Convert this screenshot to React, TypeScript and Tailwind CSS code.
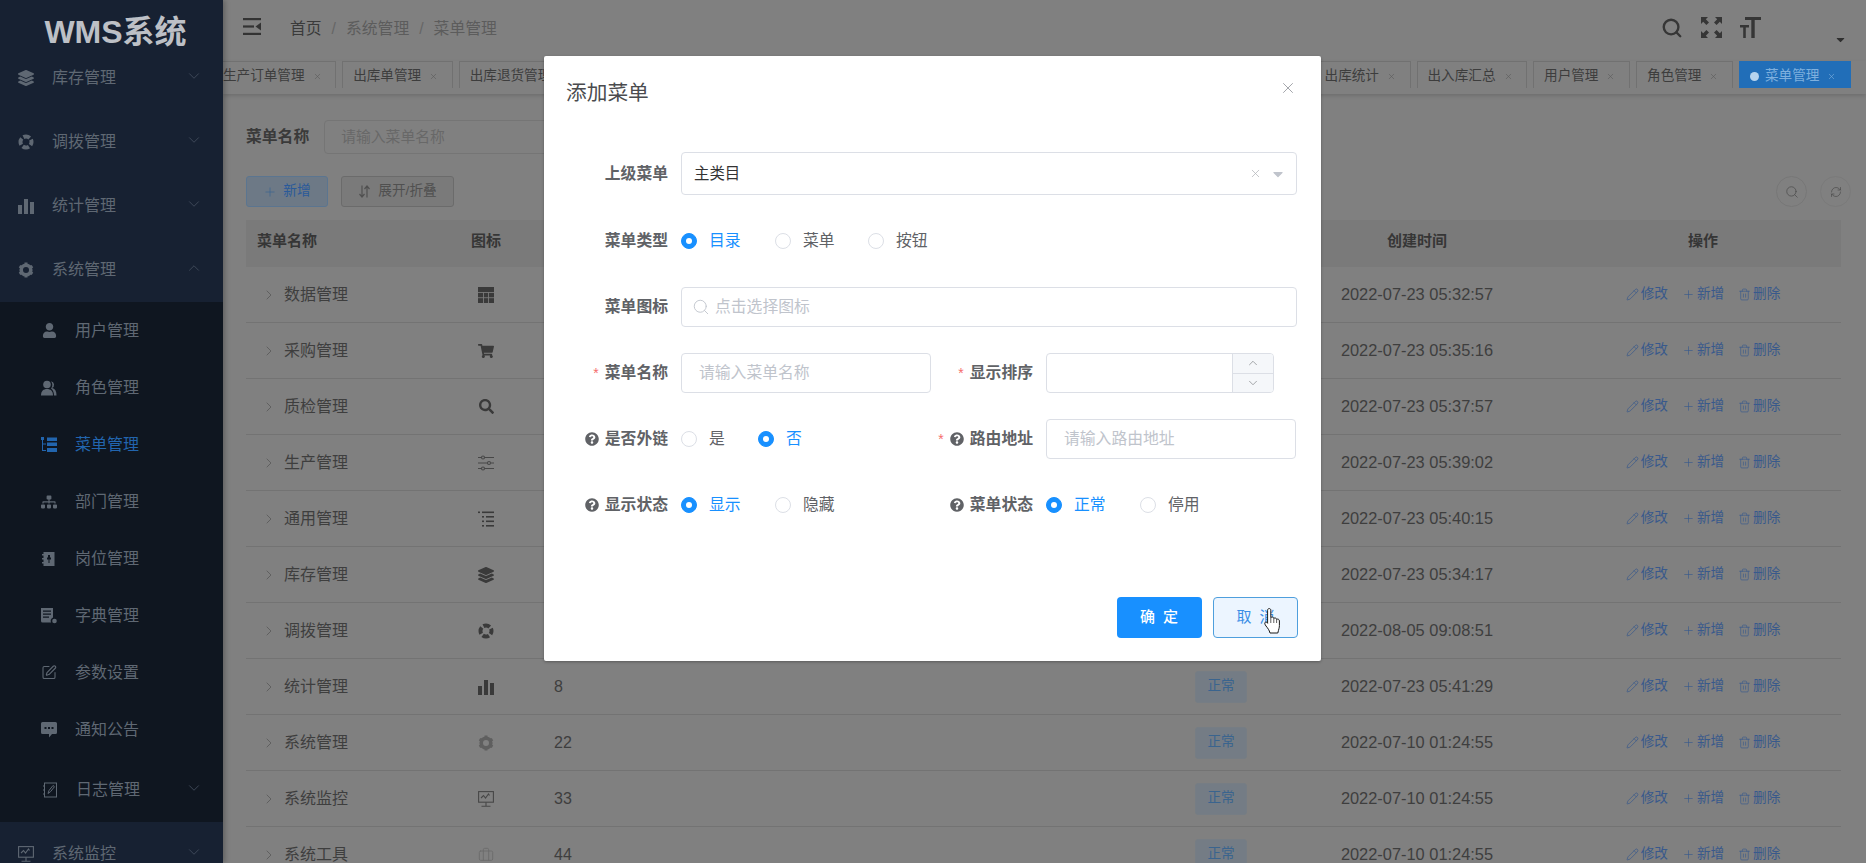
import type { ReactNode } from 'react';
import { FaLayerGroup, FaSearch, FaShoppingCart, FaSitemap, FaUser, FaQuestionCircle, FaCaretDown } from 'react-icons/fa';
import { Briefcase, ChevronDown, ChevronRight, ChevronUp, Pencil, Plus, RefreshCw, Search, SquarePen, Trash2, X } from 'lucide-react';

const FONT = "font-['Liberation_Sans','Noto_Sans_CJK_SC',sans-serif]";

function BarsIcon({ size = 16 }: { size?: number }) {
  return (
    <svg width={size} height={size} viewBox="0 0 16 16" fill="currentColor">
      <rect x="0" y="7" width="4" height="9" />
      <rect x="6" y="1" width="4" height="15" />
      <rect x="12" y="4" width="4" height="12" />
    </svg>
  );
}

function RingIcon() {
  return (
    <svg width="16" height="16" viewBox="0 0 16 16" fill="none" stroke="currentColor">
      <circle cx="8" cy="8" r="5.500" strokeWidth="4" strokeDasharray="6.640 2" strokeDashoffset="3.320" />
    </svg>
  );
}

function GearIcon() {
  return (
    <svg width="16" height="16" viewBox="0 0 16 16" fill="none" stroke="currentColor">
      <circle cx="8" cy="8" r="4.800" strokeWidth="3.600" />
      <path d="M8 0.500v2.500M8 13v2.500M1.500 4.250l2.200 1.250M12.300 10.500l2.200 1.250M1.500 11.750l2.200-1.250M12.300 5.500l2.200-1.250" strokeWidth="3" />
    </svg>
  );
}

function RoleIcon() {
  return (
    <svg width="16" height="16" viewBox="0 0 16 16" fill="currentColor">
      <circle cx="6" cy="4.500" r="3.800" />
      <path d="M0 15.500c0-4.500 2.500-6.500 6-6.500s6 2 6 6.500z" />
      <path d="M10 1.200a3.600 3.600 0 0 1 1 6.800c3 .5 4.500 3 4.500 7.500H13c0-3-1-5.500-3-7 .8-1 1.500-2.300 1.300-4-.1-1.500-.6-2.500-1.300-3.300z" />
    </svg>
  );
}

function TreeTableIcon() {
  return (
    <svg width="16" height="16" viewBox="0 0 16 16" fill="currentColor">
      <rect x="0" y="0" width="3" height="3" />
      <rect x="1" y="3" width="1" height="11" />
      <rect x="1" y="6.500" width="4" height="1" />
      <rect x="1" y="13" width="4" height="1" />
      <rect x="6" y="0.500" width="10" height="3.500" />
      <rect x="6" y="5.500" width="10" height="3.500" />
      <rect x="6" y="11" width="10" height="4" />
    </svg>
  );
}

function PostIcon() {
  return (
    <svg width="16" height="16" viewBox="0 0 16 16" fill="currentColor">
      <path fillRule="evenodd" d="M2.500 1h11v14h-11zM7 4v2.500h-1v2h1.500V12h1V8.500H10v-2H9V4z" />
      <rect x="1" y="3" width="2" height="1.500" />
      <rect x="1" y="7" width="2" height="1.500" />
      <rect x="1" y="11" width="2" height="1.500" />
    </svg>
  );
}

function DictIcon() {
  return (
    <svg width="16" height="16" viewBox="0 0 16 16" fill="currentColor">
      <path fillRule="evenodd" d="M0 0h12v9.500a4 4 0 0 0-2 5H1.500A1.500 1.500 0 0 1 0 13zM2 2.500v1.300h8V2.500zM2 5.500v1.300h8V5.500zM2 8.500v1.300h6V8.500z" />
      <circle cx="13.500" cy="13" r="2.300" />
    </svg>
  );
}

function NoticeIcon() {
  return (
    <svg width="16" height="16" viewBox="0 0 16 16" fill="currentColor">
      <path fillRule="evenodd" d="M1.500 0h13A1.500 1.500 0 0 1 16 1.500v9a1.500 1.500 0 0 1-1.500 1.500H11l-3 3.500V12H1.500A1.500 1.500 0 0 1 0 10.500v-9A1.500 1.500 0 0 1 1.500 0zM3.500 5v2h2V5zM7 5v2h2V5zM10.500 5v2h2V5z" />
    </svg>
  );
}

function LogIcon() {
  return (
    <svg width="15" height="16" viewBox="0 0 15 16" fill="none" stroke="currentColor" strokeWidth="1">
      <rect x="1.500" y="1" width="12" height="14" />
      <path d="M5 11.500l1-3 4-5 1.500 1.200-4 5z" />
      <path d="M0 4h2M0 8h2M0 12h2" />
    </svg>
  );
}

function ListIndentIcon() {
  return (
    <svg width="16" height="16" viewBox="0 0 16 16" fill="currentColor">
      <rect x="0" y="0.500" width="2" height="1.600" />
      <rect x="4" y="0.500" width="12" height="1.600" />
      <rect x="4" y="5" width="2" height="1.600" />
      <rect x="8" y="5" width="8" height="1.600" />
      <rect x="4" y="9.500" width="2" height="1.600" />
      <rect x="8" y="9.500" width="8" height="1.600" />
      <rect x="4" y="14" width="2" height="1.600" />
      <rect x="8" y="14" width="8" height="1.600" />
    </svg>
  );
}

function TableIcon() {
  return (
    <svg width="16" height="16" viewBox="0 0 16 16">
      <rect width="16" height="16" fill="currentColor" />
      <path d="M5.500 5.500V16M10.500 5.500V16M0 5.500h16M0 10.700h16" stroke="#808080" strokeWidth="0.800" />
    </svg>
  );
}

function SlidersIcon() {
  return (
    <svg width="16" height="16" viewBox="0 0 16 16" fill="none" stroke="currentColor" strokeWidth="1.100">
      <path d="M0 2.500h3.500M6.500 2.500H16M0 8h9.500M12.500 8H16M0 13.500h3.500M6.500 13.500H16" />
      <circle cx="5" cy="2.500" r="1.500" />
      <circle cx="11" cy="8" r="1.500" />
      <circle cx="5" cy="13.500" r="1.500" />
    </svg>
  );
}

function MonitorIcon() {
  return (
    <svg width="16" height="16" viewBox="0 0 16 16" fill="none" stroke="currentColor" strokeWidth="1.100">
      <rect x="0.600" y="0.600" width="14.800" height="10.600" />
      <path d="M3 7l2.500-2.500 2 2.500 3-4 1 1.500" />
      <path d="M8 11.200V15M3.500 15.300h9" />
    </svg>
  );
}

function ExpandIcon() {
  return (
    <svg width="13" height="13" viewBox="0 0 13 13" fill="none" stroke="currentColor" strokeWidth="1.200">
      <path d="M4 0.500v11M1.500 9l2.500 3 2.500-3" />
      <path d="M9 12.500v-11M6.500 4L9 1l2.500 3" />
    </svg>
  );
}

function HamburgerIcon() {
  return (
    <svg width="18" height="17" viewBox="0 0 18 17" fill="currentColor">
      <rect x="0" y="0" width="18" height="2.200" />
      <rect x="0" y="7.400" width="11" height="2.200" />
      <rect x="0" y="14.800" width="18" height="2.200" />
      <path d="M18 4.500v8l-5.500-4z" />
    </svg>
  );
}

function FullscreenIcon() {
  return (
    <svg width="21" height="21" viewBox="0 0 21 21" fill="currentColor">
      <path d="M0 0h7L4.800 2.200 8 5.400 5.400 8 2.200 4.800 0 7z" />
      <path d="M21 0v7l-2.200-2.200L15.600 8 13 5.400l3.200-3.200L14 0z" />
      <path d="M0 21v-7l2.200 2.200L5.400 13 8 15.600l-3.200 3.200L7 21z" />
      <path d="M21 21h-7l2.200-2.200L13 15.600 15.600 13l3.200 3.200L21 14z" />
    </svg>
  );
}

function FontSizeIcon() {
  return (
    <svg width="21" height="21" viewBox="0 0 21 21" fill="currentColor">
      <path d="M5 0h16v3h-6.300v18h-3.400V3H5z" />
      <path d="M0 8h9v2.400H5.800V21H3.200V10.400H0z" />
    </svg>
  );
}

function HandCursor() {
  return (
    <svg width="20" height="27" viewBox="0 0 20 27">
      <path
        d="M3.600 3.200c0-2.200 3.200-2.200 3.200 0v7.300c1.200-.8 2.800-.4 3 .8 1-.7 2.600-.3 2.800 1 1.100-.6 2.800 0 2.800 1.600v4.600c0 2.300-.7 3.800-1.600 7.500H6c-.8-3-2-4.500-4-7C.8 17.500.4 16 1.200 15.300c.8-.7 1.700 0 2.400 1z"
        fill="#ffffff"
        stroke="#1a1a1a"
        strokeWidth="1"
        strokeLinejoin="round"
      />
      <path d="M6.800 10.500V16M9.800 11.300V16M12.600 12.300V16" stroke="#1a1a1a" strokeWidth="0.700" />
    </svg>
  );
}

interface MenuItem {
  label: string;
  icon: ReactNode;
  arrow?: 'up' | 'down';
  active?: boolean;
}

const topMenus: MenuItem[] = [
  { label: '库存管理', icon: <FaLayerGroup size={16} />, arrow: 'down' },
  { label: '调拨管理', icon: <RingIcon />, arrow: 'down' },
  { label: '统计管理', icon: <BarsIcon />, arrow: 'down' },
  { label: '系统管理', icon: <GearIcon />, arrow: 'up' },
];

const subMenus: MenuItem[] = [
  { label: '用户管理', icon: <FaUser size={15} /> },
  { label: '角色管理', icon: <RoleIcon /> },
  { label: '菜单管理', icon: <TreeTableIcon />, active: true },
  { label: '部门管理', icon: <FaSitemap size={16} /> },
  { label: '岗位管理', icon: <PostIcon /> },
  { label: '字典管理', icon: <DictIcon /> },
  { label: '参数设置', icon: <SquarePen size={17} strokeWidth={1.6} /> },
  { label: '通知公告', icon: <NoticeIcon /> },
];

const rows: { name: string; icon: ReactNode; order?: string; date: string; iconColor?: string }[] = [
  { name: '数据管理', icon: <TableIcon />, order: '1', date: '2022-07-23 05:32:57' },
  { name: '采购管理', icon: <FaShoppingCart size={16} />, order: '2', date: '2022-07-23 05:35:16' },
  { name: '质检管理', icon: <FaSearch size={15} />, order: '3', date: '2022-07-23 05:37:57' },
  { name: '生产管理', icon: <SlidersIcon />, order: '4', date: '2022-07-23 05:39:02', iconColor: 'text-[#474747]' },
  { name: '通用管理', icon: <ListIndentIcon />, order: '5', date: '2022-07-23 05:40:15' },
  { name: '库存管理', icon: <FaLayerGroup size={16} />, order: '6', date: '2022-07-23 05:34:17' },
  { name: '调拨管理', icon: <RingIcon />, order: '7', date: '2022-08-05 09:08:51' },
  { name: '统计管理', icon: <BarsIcon />, order: '8', date: '2022-07-23 05:41:29' },
  { name: '系统管理', icon: <GearIcon />, order: '22', date: '2022-07-10 01:24:55', iconColor: 'text-[#5f5f5f]' },
  { name: '系统监控', icon: <MonitorIcon />, order: '33', date: '2022-07-10 01:24:55', iconColor: 'text-[#474747]' },
  { name: '系统工具', icon: <Briefcase size={16} strokeWidth={1.3} />, order: '44', date: '2022-07-10 01:24:55', iconColor: 'text-[#6b6b6b]' },
];

function SidebarItem({ item, sub }: { item: MenuItem; sub?: boolean }) {
  return (
    <div
      className={`relative flex shrink-0 items-center ${sub ? 'h-[57px] pl-[41px]' : 'h-[64px] pl-[18px]'} ${item.active ? 'text-[#2265ae]' : 'text-[#5f6873]'}`}
    >
      <span className="flex w-4 justify-center">{item.icon}</span>
      <span className="ml-[18px] text-[16px]">{item.label}</span>
      {item.arrow === 'down' && <ChevronDown size={18} strokeWidth={1.2} className="absolute top-[21px] left-[185px] text-[#424c5b]" />}
      {item.arrow === 'up' && <ChevronUp size={18} strokeWidth={1.2} className="absolute top-[21px] left-[185px] text-[#424c5b]" />}
    </div>
  );
}

function Sidebar() {
  return (
    <aside className="relative z-10 flex h-full w-[223px] shrink-0 flex-col overflow-hidden bg-[#172132] shadow-[2px_0_5px_rgba(0,0,0,0.25)]">
      <div className="flex h-[46px] shrink-0 items-center justify-center pt-[18px] pl-[8px] text-[32px] leading-none font-bold text-[#bdc0c6]">
        WMS系统
      </div>
      {topMenus.map((m) => (
        <SidebarItem key={m.label} item={m} />
      ))}
      <div className="flex flex-col bg-[#0f1620]">
        {subMenus.map((m) => (
          <SidebarItem key={m.label} item={m} sub />
        ))}
        <div className="relative flex h-[64px] shrink-0 items-center pl-[42px] text-[#5f6873]">
          <span className="flex w-4 justify-center">
            <LogIcon />
          </span>
          <span className="ml-[18px] text-[16px]">日志管理</span>
          <ChevronDown size={18} strokeWidth={1.2} className="absolute top-[21px] left-[185px] text-[#424c5b]" />
        </div>
      </div>
      <SidebarItem item={{ label: '系统监控', icon: <MonitorIcon />, arrow: 'down' }} />
    </aside>
  );
}

function Tag({ label, active }: { label: string; active?: boolean }) {
  return (
    <div
      className={`flex h-[27px] shrink-0 items-center border border-b-0 pt-[3px] pr-[13.600px] pl-[10px] text-[13.600px] ${
        active ? 'border-[#216eb8] bg-[#216eb8] text-[#7fb0de]' : 'border-[#717171] bg-[#808080] text-[#3d3d3d]'
      }`}
    >
      {active && <span className="mr-[6px] h-[9px] w-[9px] rounded-full bg-[#b5d3ee]" />}
      <span>{label}</span>
      <X size={9} strokeWidth={1.6} className={`ml-[8px] ${active ? 'text-[#7fb0de]' : 'text-[#5b5b5b]'}`} />
    </div>
  );
}

function TopBar() {
  return (
    <>
      <header className="flex h-[61px] shrink-0 items-start pl-[20px] text-[#333333]">
        <span className="mt-[18px]">
          <HamburgerIcon />
        </span>
        <nav className="mt-[17px] ml-[29px] flex items-center text-[15.800px] text-[#5c5c5c]">
          <span className="text-[#3a3a3a]">首页</span>
          <span className="mx-[10px] text-[#666666]">/</span>
          <span>系统管理</span>
          <span className="mx-[10px] text-[#666666]">/</span>
          <span>菜单管理</span>
        </nav>
        <div className="mt-[17px] ml-auto flex items-start gap-[18px] pr-[105px] text-[#363636]">
          <Search size={22} strokeWidth={2.6} />
          <FullscreenIcon />
          <FontSizeIcon />
        </div>
        <FaCaretDown size={13} className="absolute top-[33px] right-[19px] text-[#2f2f2f]" />
      </header>
      <div className="flex h-[33px] shrink-0 justify-between overflow-hidden bg-[#808080] pr-[15px] shadow-[0_2px_4px_rgba(0,0,0,0.14)]">
        <div className="ml-[-11px] flex gap-[6px]">
          <Tag label="生产订单管理" />
          <Tag label="出库单管理" />
          <Tag label="出库退货管理" />
        </div>
        <div className="flex gap-[6px]">
          <Tag label="出库统计" />
          <Tag label="出入库汇总" />
          <Tag label="用户管理" />
          <Tag label="角色管理" />
          <Tag label="菜单管理" active />
        </div>
      </div>
    </>
  );
}

function MenuTable() {
  const cols = 'grid grid-cols-[201px_78px_648px_96px_296px_276px] items-center';
  return (
    <div className="mt-[13px] flex flex-col">
      <div className={`${cols} h-[47px] bg-[#7a7a7a] pb-[4px] text-[15px] font-bold text-[#363636]`}>
        <span className="pl-[11px]">菜单名称</span>
        <span className="text-center">图标</span>
        <span />
        <span />
        <span className="text-center">创建时间</span>
        <span className="text-center">操作</span>
      </div>
      {rows.map((r) => (
        <div key={r.name} className={`${cols} h-[56px] shrink-0 border-b border-[#737373] text-[#3e3e3e]`}>
          <span className="flex items-center pl-[15px] text-[16px]">
            <ChevronRight size={16} strokeWidth={1.3} className="text-[#5a5a5a]" />
            <span className="ml-[7px]">{r.name}</span>
          </span>
          <span className={`flex justify-center ${r.iconColor ?? 'text-[#3a3a3a]'}`}>{r.icon}</span>
          <span className="pl-[29px] text-[16px]">{r.order}</span>
          <span className="flex justify-center">
            <span className="flex h-[32px] w-[52px] items-center justify-center rounded-[3px] border border-[#767d84] bg-[#747c85] text-[13.600px] text-[#3a648e]">
              正常
            </span>
          </span>
          <span className="text-center text-[16.400px]">{r.date}</span>
          <span className="flex items-center justify-center gap-[14px] text-[13.600px] text-[#38598c]">
            <span className="flex items-center gap-[2px]">
              <Pencil size={13} strokeWidth={1.3} />
              修改
            </span>
            <span className="flex items-center gap-[2px]">
              <Plus size={13} strokeWidth={1.2} />
              新增
            </span>
            <span className="flex items-center gap-[2px]">
              <Trash2 size={13} strokeWidth={1.2} />
              删除
            </span>
          </span>
        </div>
      ))}
    </div>
  );
}

function Content() {
  return (
    <main className="flex flex-col pr-[25px] pl-[23px]">
      <div className="mt-[26px] flex items-center">
        <span className="text-[15.800px] font-bold text-[#3a3a3a]">菜单名称</span>
        <span className="ml-[15px] flex h-[34px] w-[274px] items-center rounded-[4px] border border-[#757575] pl-[16px] text-[14.800px] text-[#686868]">
          请输入菜单名称
        </span>
      </div>
      <div className="mt-[22px] flex h-[31px] items-center justify-between">
        <div className="flex h-full gap-[13px]">
          <button className="flex w-[82px] items-center justify-center gap-[6px] rounded-[3px] border border-[#5b7590] bg-[#6d7986] text-[13.700px] text-[#2a5a9a]">
            <Plus size={14} strokeWidth={1.3} className="text-[#3d6590]" />
            新增
          </button>
          <button className="flex w-[113px] items-center justify-center gap-[7px] rounded-[3px] border border-[#6b6b6b] bg-[#7a7a7a] text-[13.700px] text-[#505050]">
            <ExpandIcon />
            展开/折叠
          </button>
        </div>
        <div className="mr-[-10px] flex gap-[13px]">
          <span className="flex h-[31px] w-[31px] items-center justify-center rounded-full border border-[#777777] text-[#4c4c4c]">
            <Search size={14} strokeWidth={1.3} />
          </span>
          <span className="flex h-[31px] w-[31px] items-center justify-center rounded-full border border-[#7a7a7a] text-[#4c4c4c]">
            <RefreshCw size={12} strokeWidth={1.4} />
          </span>
        </div>
      </div>
      <MenuTable />
    </main>
  );
}

function Radio({ label, checked }: { label: string; checked?: boolean }) {
  return (
    <span className="flex items-center gap-[12px]">
      <span
        className={`flex h-4 w-4 items-center justify-center rounded-full border ${
          checked ? 'border-[#1890ff] bg-[#1890ff]' : 'border-[#dcdfe6] bg-white'
        }`}
      >
        {checked && <span className="h-[6px] w-[6px] rounded-full bg-white" />}
      </span>
      <span className={`text-[15.800px] ${checked ? 'text-[#1890ff]' : 'text-[#606266]'}`}>{label}</span>
    </span>
  );
}

function RadioPair({ a, b, aOn, third }: { a: string; b: string; aOn: boolean; third?: string }) {
  return (
    <div className="flex h-[40px] items-center">
      <span className="w-[94px]">
        <Radio label={a} checked={aOn} />
      </span>
      <span className="w-[93px]">
        <Radio label={b} checked={!aOn} />
      </span>
      {third && <Radio label={third} />}
    </div>
  );
}

function FieldLabel({ text, star, help, width }: { text: string; star?: boolean; help?: boolean; width: string }) {
  return (
    <span className={`flex shrink-0 items-center justify-end gap-[6px] text-[15.800px] font-bold text-[#606266] ${width}`}>
      {star && <span className="text-[14px] font-normal text-[#f56c6c]">*</span>}
      {help && <FaQuestionCircle size={14} className="text-[#606266]" />}
      {text}
    </span>
  );
}

function TextBox({ placeholder, width = 'w-full' }: { placeholder: string; width?: string }) {
  return (
    <span className={`flex h-[40px] items-center rounded-[4px] border border-[#dcdfe6] bg-white pl-[17px] text-[15.800px] text-[#c0c4cc] ${width}`}>
      {placeholder}
    </span>
  );
}

function AddMenuDialog() {
  return (
    <div className="absolute top-[56px] left-[544px] z-20 flex h-[605px] w-[777px] flex-col rounded-[2px] bg-white shadow-[0_1px_3px_rgba(0,0,0,0.3)]">
      <div className="relative h-[96px] shrink-0">
        <span className="absolute top-[21px] left-[22px] text-[20.700px] text-[#4a4b4e]">添加菜单</span>
        <X size={18} strokeWidth={1.1} className="absolute top-[23px] right-[24px] text-[#909399]" />
      </div>
      <div className="flex flex-col gap-[26px]">
        <div className="flex items-center">
          <FieldLabel text="上级菜单" width="w-[124px]" />
          <span className="relative ml-[13px] flex h-[43px] w-[616px] items-center rounded-[4px] border border-[#dcdfe6] pl-[12px] text-[15.400px] text-[#333333]">
            主类目
            <X size={13} strokeWidth={1.4} className="absolute right-[34px] text-[#b4b6ba]" />
            <FaCaretDown size={16} className="absolute right-[10px] text-[#c0c4cc]" />
          </span>
        </div>
        <div className="flex items-center">
          <FieldLabel text="菜单类型" width="w-[124px]" />
          <span className="ml-[13px]">
            <RadioPair a="目录" b="菜单" third="按钮" aOn />
          </span>
        </div>
        <div className="flex items-center">
          <FieldLabel text="菜单图标" width="w-[124px]" />
          <span className="ml-[13px] flex h-[40px] w-[616px] items-center gap-[5px] rounded-[4px] border border-[#dcdfe6] pl-[10px] text-[15.800px] text-[#c0c4cc]">
            <Search size={18} strokeWidth={1.2} />
            点击选择图标
          </span>
        </div>
        <div className="grid grid-cols-[387px_1fr]">
          <div className="flex items-center">
            <FieldLabel text="菜单名称" star width="w-[124px]" />
            <span className="ml-[13px]">
              <TextBox placeholder="请输入菜单名称" width="w-[250px]" />
            </span>
          </div>
          <div className="flex items-center">
            <FieldLabel text="显示排序" star width="w-[102px]" />
            <span className="ml-[13px] flex h-[40px] w-[228px] justify-end overflow-hidden rounded-[4px] border border-[#dcdfe6]">
              <span className="flex w-[41px] flex-col border-l border-[#dcdfe6] bg-[#f5f7fa] text-[#808285]">
                <span className="flex flex-1 items-center justify-center border-b border-[#dcdfe6]">
                  <ChevronUp size={14} strokeWidth={1.2} />
                </span>
                <span className="flex flex-1 items-center justify-center">
                  <ChevronDown size={14} strokeWidth={1.2} />
                </span>
              </span>
            </span>
          </div>
        </div>
        <div className="grid grid-cols-[387px_1fr]">
          <div className="flex items-center">
            <FieldLabel text="是否外链" help width="w-[124px]" />
            <span className="ml-[13px] flex h-[40px] items-center">
              <span className="w-[77px]">
                <Radio label="是" />
              </span>
              <Radio label="否" checked />
            </span>
          </div>
          <div className="flex items-center">
            <FieldLabel text="路由地址" star help width="w-[102px]" />
            <span className="ml-[13px]">
              <TextBox placeholder="请输入路由地址" width="w-[250px]" />
            </span>
          </div>
        </div>
        <div className="grid grid-cols-[387px_1fr]">
          <div className="flex items-center">
            <FieldLabel text="显示状态" help width="w-[124px]" />
            <span className="ml-[13px]">
              <RadioPair a="显示" b="隐藏" aOn />
            </span>
          </div>
          <div className="flex items-center">
            <FieldLabel text="菜单状态" help width="w-[102px]" />
            <span className="ml-[13px]">
              <RadioPair a="正常" b="停用" aOn />
            </span>
          </div>
        </div>
      </div>
      <div className="mt-auto flex justify-end gap-[11.500px] pr-[23px] pb-[23px]">
        <button className="flex h-[41px] w-[85px] items-center justify-center rounded-[4px] bg-[#1890ff] text-[15px] font-medium text-white [word-spacing:4px]">
          确 定
        </button>
        <button className="relative flex h-[41px] w-[85px] items-center justify-center rounded-[4px] border-[1.500px] border-[#4f9fdd] bg-[#ecf5ff] text-[15px] text-[#3a8ee6] [word-spacing:4px]">
          取 消
          <span className="absolute top-[9px] left-[50px]">
            <HandCursor />
          </span>
        </button>
      </div>
    </div>
  );
}

export default function App() {
  return (
    <div className={`relative flex h-[863px] w-[1866px] overflow-hidden bg-[#808080] ${FONT}`}>
      <Sidebar />
      <div className="flex min-w-0 flex-1 flex-col">
        <TopBar />
        <Content />
      </div>
      <AddMenuDialog />
    </div>
  );
}
